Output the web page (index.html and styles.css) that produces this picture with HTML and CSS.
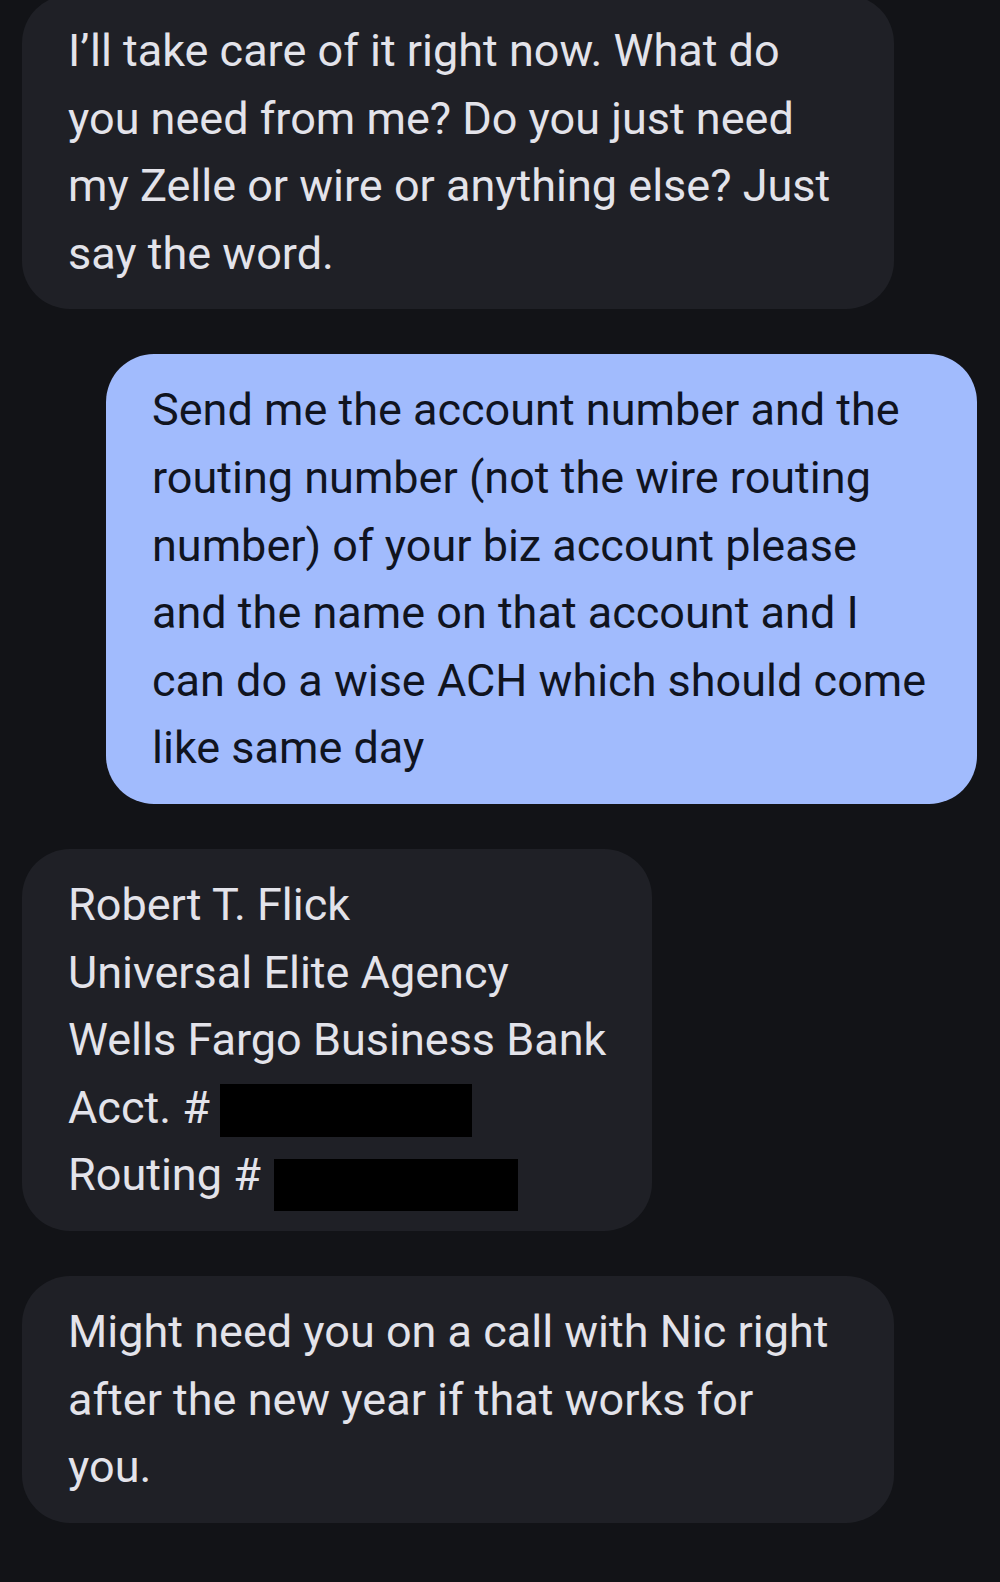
FILE: index.html
```html
<!DOCTYPE html>
<html>
	<head>
		<meta charset="UTF-8">
		<title>Messages</title>
		<link rel="stylesheet" href="styles.css">
	</head>
	<body>
		<div class="thread">
			<div class="msg in wide first">
				I’ll take care of it right now. What do<br>
				you need from me? Do you just need<br>
				my Zelle or wire or anything else? Just<br>
				say the word.
			</div>
			<div class="msg out wide">
				Send me the account number and the<br>
				routing number (not the wire routing<br>
				number) of your biz account please<br>
				and the name on that account and I<br>
				can do a wise ACH which should come<br>
				like same day
			</div>
			<div class="msg in">
				Robert T. Flick<br>
				Universal Elite Agency<br>
				Wells Fargo Business Bank<br>
				Acct. # <span class="redact acct"></span><br>
				Routing # <span class="redact routing"></span>
			</div>
			<div class="msg in wide">
				Might need you on a call with Nic right<br>
				after the new year if that works for<br>
				you.
			</div>
		</div>
	</body>
</html>
```
FILE: styles.css
```css
* {
	padding: 0;
	margin: 0;
}
html, body {
	background: #121317;
}
body {
	height: 1582px;
	overflow: hidden;
	font-family: Roboto, "Noto Sans", sans-serif;
}
.thread {
	display: flex;
	flex-direction: column;
	align-items: flex-start;
	gap: 45px;
	padding: 0 23px 0 22px;
}
.msg {
	box-sizing: border-box;
	max-width: 872px;
	padding: 22px 46px 22px 46px;
	border-radius: 48px;
	font-size: 45px;
	line-height: 67.6px;
	white-space: nowrap;
}
.msg.wide {
	width: 872px;
}
.msg.first {
	margin-top: -5px;
}
.msg.in {
	background: #1f2026;
	color: #e3e3ea;
}
.msg.out {
	align-self: flex-end;
	width: 871px;
	background: #a1bbfd;
	color: #10141f;
}
.redact {
	display: inline-block;
	background: #000;
	vertical-align: middle;
}
.redact.acct {
	width: 252px;
	height: 53px;
	margin-left: -1px;
}
.redact.routing {
	width: 244px;
	height: 52px;
	position: relative;
	top: 7px;
	margin-left: 2px;
}
```
